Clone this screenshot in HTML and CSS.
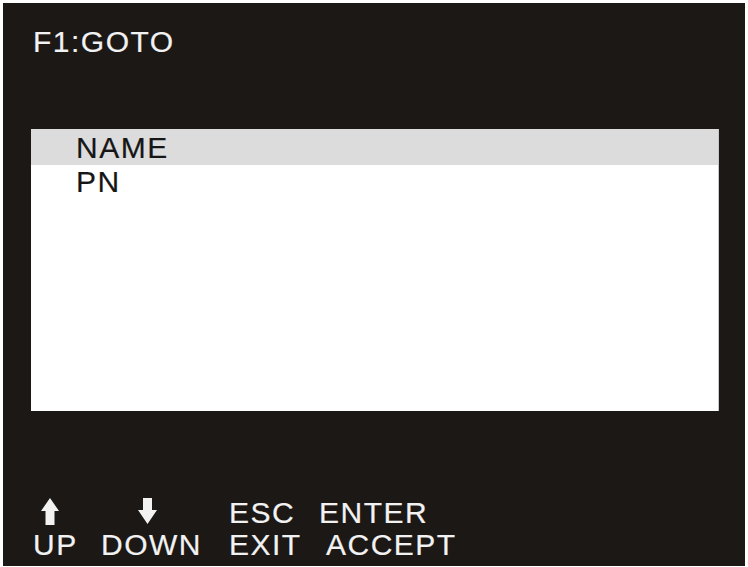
FILE: index.html
```html
<!DOCTYPE html>
<html>
<head>
<meta charset="utf-8">
<link rel="stylesheet" href="styles.css">
</head>
<body>
<div class="screen">
  <div class="title">F1:GOTO</div>
  <div class="list">
    <div class="row selected">NAME</div>
    <div class="row">PN</div>
  </div>
  <div class="keys">
    <div class="key">
      <div class="icon-line">
        <svg class="arrow-up" width="18" height="27" viewBox="0 0 18 27"><polygon points="9,0 18,13 13.5,13 13.5,27 4.5,27 4.5,13 0,13" fill="#f2f2f2"/></svg>
      </div>
      <div class="label">UP</div>
    </div>
    <div class="key">
      <div class="icon-line">
        <svg class="arrow-down" width="19" height="26" viewBox="0 0 19 26"><polygon points="5,0 14,0 14,12 19,12 9.5,26 0,12 5,12" fill="#f2f2f2"/></svg>
      </div>
      <div class="label">DOWN</div>
    </div>
    <div class="key">
      <div class="label">ESC</div>
      <div class="label">EXIT</div>
    </div>
    <div class="key">
      <div class="label">ENTER</div>
      <div class="label shifted">ACCEPT</div>
    </div>
  </div>
</div>
</body>
</html>
```
FILE: styles.css
```css
html, body {
  margin: 0;
  padding: 0;
  background: #ffffff;
}
body {
  font-family: "Liberation Sans", Arial, sans-serif;
}
.screen {
  margin: 3px 0 0 3px;
  width: 742px;
  height: 563px;
  background: #1b1816;
  box-sizing: border-box;
  padding: 22px 0 0 28px;
  color: #f2f2f2;
  font-size: 30px;
  letter-spacing: 1.5px;
  -webkit-text-stroke: 0.2px currentColor;
}
.title {
  line-height: 34px;
  height: 34px;
  margin-left: 2px;
}
.list {
  margin-top: 70px;
  width: 688px;
  height: 282px;
  background: #ffffff;
  box-sizing: border-box;
  border-right: 1px solid #c8c8c8;
  color: #161616;
}
.row {
  line-height: 34px;
  height: 34px;
  padding-left: 45px;
}
.row.selected {
  background: #dcdcdc;
  height: 34px;
  padding-top: 2px;
}
.keys {
  margin-top: 86px;
  margin-left: 2px;
  display: grid;
  grid-template-columns: 68px 128px 90px auto;
}
.key {
  display: flex;
  flex-direction: column;
}
.icon-line {
  height: 32px;
}
.icon-line svg {
  display: block;
}
.arrow-up {
  margin: 1px 0 0 8px;
}
.arrow-down {
  margin: 1px 0 0 37px;
}
.label {
  line-height: 32px;
  height: 32px;
  white-space: nowrap;
}
.label.shifted {
  margin-left: 7px;
}
```
